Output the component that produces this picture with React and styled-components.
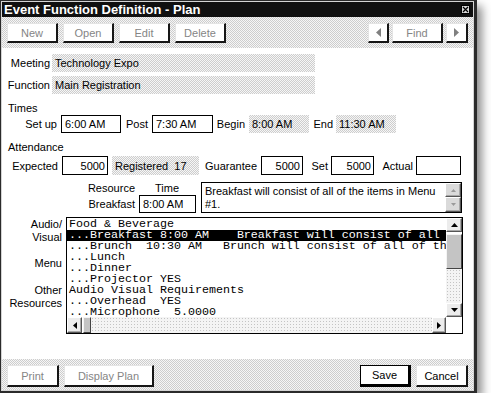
import React from 'react';
import styled, { createGlobalStyle, css } from 'styled-components';

const GlobalStyle = createGlobalStyle`
  html, body { margin: 0; padding: 0; background: #fff; }
  body { font-family: "Liberation Sans", Arial, sans-serif; font-size: 11px; color: #000; }
  * { box-sizing: border-box; }
`;

const dither = css`
  background-color: #e2e2e2;
  background-image: repeating-conic-gradient(#cdcdcd 0 25%, #f6f6f6 0 50%);
  background-size: 2px 2px;
`;

const sparse = css`
  background-color: #f4f4f4;
  background-image: radial-gradient(#c4c4c4 0.6px, transparent 0.7px);
  background-size: 3px 3px;
`;

const Window = styled.div`
  width: 477px;
  height: 393px;
  display: flex;
  flex-direction: column;
  border-style: solid;
  border-color: #2b2b2b;
  border-width: 1px 3px 2px 1px;
  padding: 1px;
  background: #d4d4d4;
  box-shadow: 5px 6px 9px rgba(0, 0, 0, 0.45);
`;

const TitleBar = styled.div`
  height: 15px;
  flex-shrink: 0;
  background: #101010;
  color: #fff;
  font-weight: bold;
  font-size: 13px;
  display: flex;
  align-items: center;
  justify-content: space-between;
  padding: 0 3px 0 2px;
  white-space: nowrap;
`;

const CloseBox = styled.div`
  width: 9px;
  height: 9px;
  background: #d8d8d8;
  border: 1px solid #000;
  display: flex;
  align-items: center;
  justify-content: center;
`;

const Bar = styled.div`
  height: 31px;
  flex-shrink: 0;
  ${dither};
  display: flex;
  align-items: flex-start;
  padding: 6px 5px 0 5px;
  gap: ${p => p.$gap || 5}px;
`;

const Spacer = styled.div`
  flex: 1;
`;

const Group = styled.div`
  display: flex;
  gap: 3px;
`;

const Btn = styled.button`
  width: ${p => p.$w}px;
  height: ${p => p.$h || 20}px;
  padding: 0;
  background: #fff;
  border-style: solid;
  border-width: 1px 2px 2px 1px;
  border-color: #e4e4e4 #161616 #161616 #e4e4e4;
  font: 11px "Liberation Sans", Arial, sans-serif;
  color: ${p => (p.$off ? '#858585' : '#000')};
  display: flex;
  align-items: center;
  justify-content: center;
  flex-shrink: 0;
  ${p =>
    p.$default &&
    css`
      border-color: #000;
      border-width: 1px 3px 3px 1px;
    `}
`;

const Content = styled.div`
  flex: 1;
  background: #fff;
  padding-top: 6px;
  display: flex;
  flex-direction: column;
`;

const Row = styled.div`
  display: flex;
  height: ${p => p.$h || 18}px;
  margin-top: ${p => p.$mt || 0}px;
  flex-shrink: 0;
`;

const Lbl = styled.span`
  width: ${p => p.$w}px;
  padding-right: ${p => (p.$pr === undefined ? 4 : p.$pr)}px;
  text-align: right;
  white-space: nowrap;
  flex-shrink: 0;
  align-self: center;
`;

const GrayField = styled.div`
  width: ${p => p.$w}px;
  ${dither};
  padding-left: 3px;
  display: flex;
  align-items: center;
  white-space: nowrap;
  flex-shrink: 0;
`;

const Input = styled.div`
  width: ${p => p.$w}px;
  border: 1px solid #000;
  background: #fff;
  padding: 0 ${p => (p.$right ? 2 : 3)}px;
  display: flex;
  align-items: center;
  justify-content: ${p => (p.$right ? 'flex-end' : 'flex-start')};
  white-space: nowrap;
  flex-shrink: 0;
`;

const Section = styled.div`
  line-height: 14px;
  height: 14px;
  margin-top: 7px;
  padding-left: 6px;
`;

const ResourceBlock = styled.div`
  display: flex;
  margin-top: 6px;
`;

const ResGrid = styled.div`
  display: grid;
  grid-template-columns: 137px 57px;
  grid-template-rows: 14px 18px;
`;

const GridLbl = styled.div`
  text-align: right;
  padding-right: 4px;
  line-height: ${p => p.$lh}px;
`;

const GridHead = styled.div`
  padding-left: 16px;
  line-height: 14px;
`;

const Memo = styled.div`
  width: 261px;
  height: 31px;
  margin: 1px 0 0 5px;
  border: 1px solid #000;
  display: flex;
`;

const MemoText = styled.div`
  flex: 1;
  padding: 2px 4px 0 3px;
  line-height: 13px;
  overflow: hidden;
`;

const MemoScroll = styled.div`
  width: 16px;
  display: flex;
  flex-direction: column;
`;

const SBtn = styled.div`
  flex: ${p => (p.$grow ? 1 : '0 0 auto')};
  height: ${p => (p.$h ? p.$h + 'px' : 'auto')};
  width: ${p => (p.$w ? p.$w + 'px' : 'auto')};
  background: ${p => (p.$off ? '#dadada' : '#ececec')};
  border-style: solid;
  border-width: 1px;
  border-color: #fff #555 #555 #fff;
  box-shadow: inset -1px -1px 0 #a8a8a8;
  display: flex;
  align-items: center;
  justify-content: center;
`;

const ListArea = styled.div`
  display: flex;
  margin-top: 4px;
`;

const SideLabels = styled.div`
  width: 64px;
  padding: 1px 4px 0 0;
  text-align: right;
  line-height: 13px;
  display: flex;
  flex-direction: column;
`;

const SideItem = styled.div`
  margin-top: ${p => p.$mt || 0}px;
`;

const ListBox = styled.div`
  width: 397px;
  height: 117px;
  border: 1px solid #000;
  display: grid;
  grid-template-columns: 1fr 16px;
  grid-template-rows: 1fr 16px;
`;

const ListContent = styled.div`
  overflow: hidden;
  padding-top: 1px;
  font-family: "Liberation Mono", "Courier New", monospace;
  font-size: 11.67px;
  line-height: 11px;
`;

const ListRow = styled.div`
  white-space: pre;
  padding-left: 2px;
  height: 11px;
  background: ${p => (p.$sel ? '#000' : 'transparent')};
  color: ${p => (p.$sel ? '#fff' : '#000')};
`;

const VScroll = styled.div`
  display: flex;
  flex-direction: column;
`;

const HScroll = styled.div`
  display: flex;
`;

const Track = styled.div`
  flex: 1;
  ${sparse};
`;

const Thumb = styled.div`
  ${p => (p.$vertical ? css`height: 35px; margin-top: 2px;` : css`width: 8px; margin-left: 1px;`)}
  background: #c4c4c4;
  border-style: solid;
  border-width: 1px;
  border-color: #f4f4f4 #444 #444 #f4f4f4;
`;

const Corner = styled.div`
  background: #fff;
`;

const Arrow = ({ dir, color = '#000', size = 4 }) => {
  const s = size;
  let pts;
  let w;
  let h;
  if (dir === 'up' || dir === 'down') {
    w = s * 2 - 1;
    h = s;
    pts = dir === 'up' ? `0,${h} ${w / 2},0 ${w},${h}` : `0,0 ${w / 2},${h} ${w},0`;
  } else {
    w = s;
    h = s * 2 - 1;
    pts = dir === 'left' ? `${w},0 0,${h / 2} ${w},${h}` : `0,0 ${w},${h / 2} 0,${h}`;
  }
  return (
    <svg width={w} height={h} viewBox={`0 0 ${w} ${h}`}>
      <polygon points={pts} fill={color} />
    </svg>
  );
};

const rows = [
  'Food & Beverage',
  '...Breakfast 8:00 AM    Breakfast will consist of all of the items in Menu #1.',
  '...Brunch  10:30 AM   Brunch will consist of all of the items in Menu #2.',
  '...Lunch',
  '...Dinner',
  '...Projector YES',
  'Audio Visual Requirements',
  '...Overhead  YES',
  '...Microphone  5.0000',
];

export default function App() {
  return (
    <>
      <GlobalStyle />
      <Window>
        <TitleBar>
          <span>Event Function Definition - Plan</span>
          <CloseBox>
            <svg width="7" height="7" viewBox="0 0 7 7">
              <path d="M1 1 L6 6 M6 1 L1 6" stroke="#000" strokeWidth="1.2" />
            </svg>
          </CloseBox>
        </TitleBar>

        <Bar>
          <Btn $w={51} $off>New</Btn>
          <Btn $w={51} $off>Open</Btn>
          <Btn $w={51} $off>Edit</Btn>
          <Btn $w={51} $off>Delete</Btn>
          <Spacer />
          <Group>
            <Btn $w={21} $off>
              <Arrow dir="left" color="#808080" size={5} />
            </Btn>
            <Btn $w={51} $off>Find</Btn>
            <Btn $w={22} $off>
              <Arrow dir="right" color="#808080" size={5} />
            </Btn>
          </Group>
        </Bar>

        <Content>
          <Row>
            <Lbl $w={50} $pr={2}>Meeting</Lbl>
            <GrayField $w={263}>Technology Expo</GrayField>
          </Row>
          <Row $mt={4}>
            <Lbl $w={50} $pr={2}>Function</Lbl>
            <GrayField $w={263}>Main Registration</GrayField>
          </Row>

          <Section>Times</Section>
          <Row>
            <Lbl $w={59}>Set up</Lbl>
            <Input $w={60}>6:00 AM</Input>
            <Lbl $w={31}>Post</Lbl>
            <Input $w={61}>7:30 AM</Input>
            <Lbl $w={36}>Begin</Lbl>
            <GrayField $w={60}>8:00 AM</GrayField>
            <Lbl $w={27} $pr={3}>End</Lbl>
            <GrayField $w={60}>11:30 AM</GrayField>
          </Row>

          <Section>Attendance</Section>
          <Row $h={19} $mt={2}>
            <Lbl $w={60}>Expected</Lbl>
            <Input $w={46} $right>5000</Input>
            <Lbl $w={4} $pr={0} />
            <GrayField $w={87}>Registered&nbsp;&nbsp;17</GrayField>
            <Lbl $w={62}>Guarantee</Lbl>
            <Input $w={42} $right>5000</Input>
            <Lbl $w={28} $pr={3}>Set</Lbl>
            <Input $w={43} $right>5000</Input>
            <Lbl $w={42} $pr={3}>Actual</Lbl>
            <Input $w={45} $right />
          </Row>

          <ResourceBlock>
            <ResGrid>
              <GridLbl $lh={14}>Resource</GridLbl>
              <GridHead>Time</GridHead>
              <GridLbl $lh={18}>Breakfast</GridLbl>
              <Input $w={57}>8:00 AM</Input>
            </ResGrid>
            <Memo>
              <MemoText>
                Breakfast will consist of all of the items in Menu
                <br />
                #1.
              </MemoText>
              <MemoScroll>
                <SBtn $h={14} $off>
                  <Arrow dir="up" color="#9a9a9a" size={3} />
                </SBtn>
                <SBtn $grow $off>
                  <Arrow dir="down" color="#9a9a9a" size={3} />
                </SBtn>
              </MemoScroll>
            </Memo>
          </ResourceBlock>

          <ListArea>
            <SideLabels>
              <SideItem>
                Audio/
                <br />
                Visual
              </SideItem>
              <SideItem $mt={13}>Menu</SideItem>
              <SideItem $mt={14}>
                Other
                <br />
                Resources
              </SideItem>
            </SideLabels>
            <ListBox>
              <ListContent>
                {rows.map((r, i) => (
                  <ListRow key={i} $sel={i === 1}>
                    {r}
                  </ListRow>
                ))}
              </ListContent>
              <VScroll>
                <SBtn $h={14}>
                  <Arrow dir="up" size={4} />
                </SBtn>
                <Thumb $vertical />
                <Track />
                <SBtn $h={14}>
                  <Arrow dir="down" size={4} />
                </SBtn>
              </VScroll>
              <HScroll>
                <SBtn $w={15}>
                  <Arrow dir="left" size={4} />
                </SBtn>
                <Thumb />
                <Track />
                <SBtn $w={14}>
                  <Arrow dir="right" size={4} />
                </SBtn>
              </HScroll>
              <Corner />
            </ListBox>
          </ListArea>
        </Content>

        <Bar>
          <Btn $w={52} $h={22} $off>Print</Btn>
          <Btn $w={90} $h={22} $off>Display Plan</Btn>
          <Spacer />
          <Btn $w={51} $h={22} $default>Save</Btn>
          <Btn $w={52} $h={22}>Cancel</Btn>
        </Bar>
      </Window>
    </>
  );
}
